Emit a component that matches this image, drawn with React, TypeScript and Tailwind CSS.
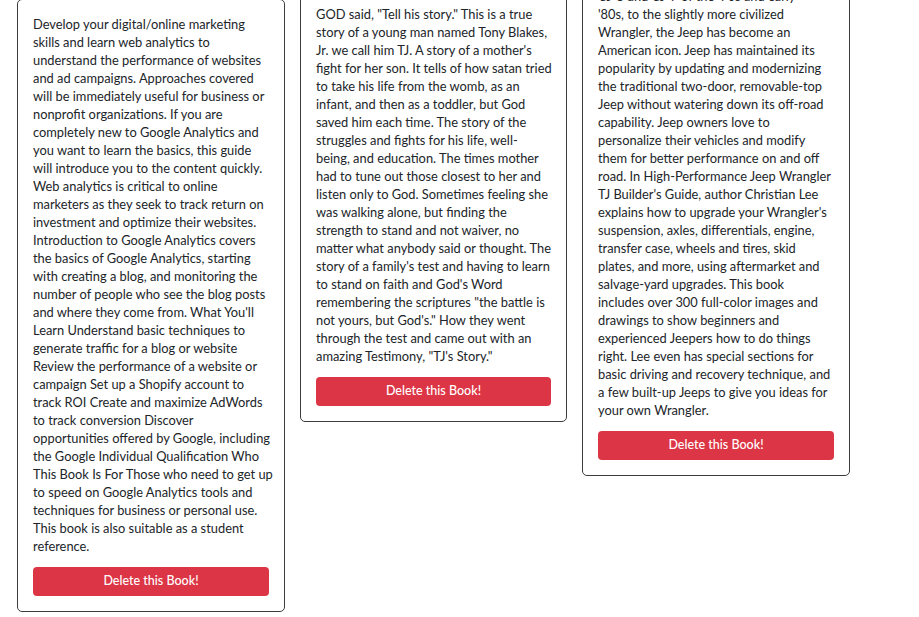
import React from "react";

const card1 = [
  "Develop your digital/online marketing",
  "skills and learn web analytics to",
  "understand the performance of websites",
  "and ad campaigns. Approaches covered",
  "will be immediately useful for business or",
  "nonprofit organizations. If you are",
  "completely new to Google Analytics and",
  "you want to learn the basics, this guide",
  "will introduce you to the content quickly.",
  "Web analytics is critical to online",
  "marketers as they seek to track return on",
  "investment and optimize their websites.",
  "Introduction to Google Analytics covers",
  "the basics of Google Analytics, starting",
  "with creating a blog, and monitoring the",
  "number of people who see the blog posts",
  "and where they come from. What You'll",
  "Learn Understand basic techniques to",
  "generate traffic for a blog or website",
  "Review the performance of a website or",
  "campaign Set up a Shopify account to",
  "track ROI Create and maximize AdWords",
  "to track conversion Discover",
  "opportunities offered by Google, including",
  "the Google Individual Qualification Who",
  "This Book Is For Those who need to get up",
  "to speed on Google Analytics tools and",
  "techniques for business or personal use.",
  "This book is also suitable as a student",
  "reference.",
];

const card2 = [
  "GOD said, \"Tell his story.\" This is a true",
  "story of a young man named Tony Blakes,",
  "Jr. we call him TJ. A story of a mother's",
  "fight for her son. It tells of how satan tried",
  "to take his life from the womb, as an",
  "infant, and then as a toddler, but God",
  "saved him each time. The story of the",
  "struggles and fights for his life, well-",
  "being, and education. The times mother",
  "had to tune out those closest to her and",
  "listen only to God. Sometimes feeling she",
  "was walking alone, but finding the",
  "strength to stand and not waiver, no",
  "matter what anybody said or thought. The",
  "story of a family's test and having to learn",
  "to stand on faith and God's Word",
  "remembering the scriptures \"the battle is",
  "not yours, but God's.\" How they went",
  "through the test and came out with an",
  "amazing Testimony, \"TJ's Story.\"",
];

const card3 = [
  "CJ-5 and CJ-7 of the '70s and early",
  "'80s, to the slightly more civilized",
  "Wrangler, the Jeep has become an",
  "American icon. Jeep has maintained its",
  "popularity by updating and modernizing",
  "the traditional two-door, removable-top",
  "Jeep without watering down its off-road",
  "capability. Jeep owners love to",
  "personalize their vehicles and modify",
  "them for better performance on and off",
  "road. In High-Performance Jeep Wrangler",
  "TJ Builder's Guide, author Christian Lee",
  "explains how to upgrade your Wrangler's",
  "suspension, axles, differentials, engine,",
  "transfer case, wheels and tires, skid",
  "plates, and more, using aftermarket and",
  "salvage-yard upgrades. This book",
  "includes over 300 full-color images and",
  "drawings to show beginners and",
  "experienced Jeepers how to do things",
  "right. Lee even has special sections for",
  "basic driving and recovery technique, and",
  "a few built-up Jeeps to give you ideas for",
  "your own Wrangler.",
];

function Card({ lines, className }: { lines: string[]; className: string }) {
  return (
    <div
      className={
        "shrink-0 flex flex-col border border-[#3b3d40] rounded-[5px] bg-white p-[15px] " +
        className
      }
    >
      <p className="text-[12.85px] leading-[18px] text-[#212529]">
        {lines.map((l, i) => (
          <span key={i} className="block whitespace-nowrap">
            {l}
          </span>
        ))}
      </p>
      <button className="mt-3 h-[29px] w-full rounded-[4px] bg-[#dc3545] text-[12.5px] font-medium text-white">
        Delete this Book!
      </button>
    </div>
  );
}

export default function App() {
  return (
    <div
      className="h-[617px] overflow-hidden bg-white"
      style={{ fontFamily: '"Lato", "Liberation Sans", sans-serif' }}
    >
      <div className="flex items-start gap-[15px] pl-[17px]">
        <Card lines={card1} className="w-[268px] -mt-px" />
        <Card lines={card2} className="w-[267px] -mt-[11px]" />
        <Card lines={card3} className="w-[268px] -mt-[29px]" />
      </div>
    </div>
  );
}
